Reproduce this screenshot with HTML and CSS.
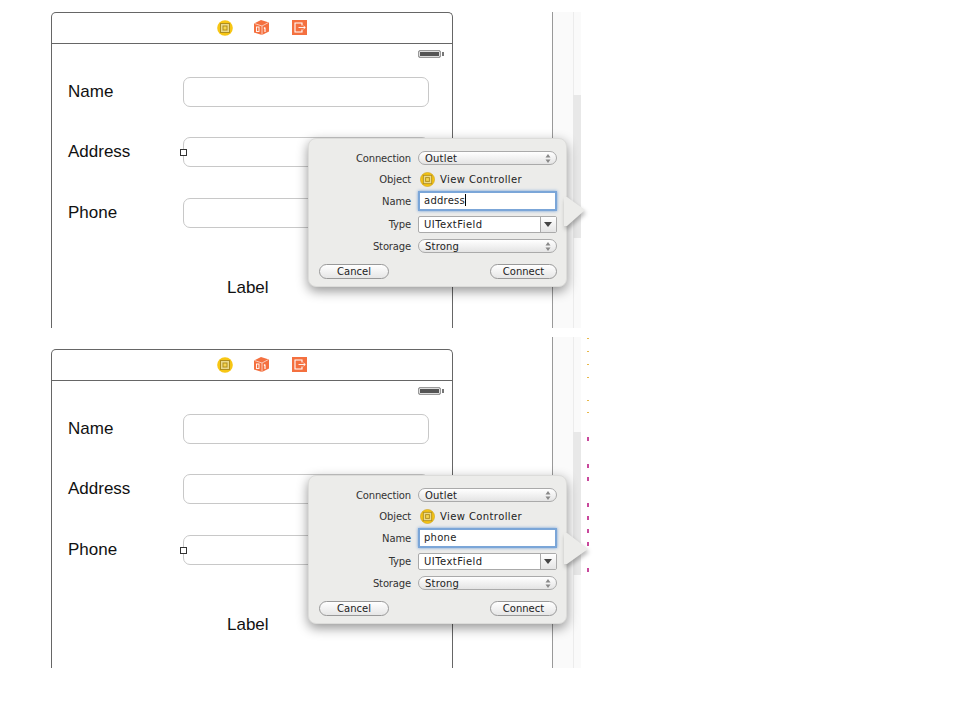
FILE: index.html
```html
<!DOCTYPE html>
<html lang="en">
<head>
<meta charset="utf-8">
<title>Outlet connections</title>
<link rel="stylesheet" href="styles.css">
</head>
<body>
<section class="shot shot-one">
  <div class="device">
    <div class="dock">
      <svg class="dock-icon" width="16" height="16" viewBox="0 0 16 16"><circle cx="8" cy="8" r="7.800" fill="#f7c614"/><rect x="3.500" y="3.500" width="9" height="9" fill="#ead98c" stroke="#b08e1c"/><rect x="6" y="6" width="4" height="4" fill="#f5d64e" stroke="#b08e1c"/></svg>
      <svg class="dock-icon" width="15" height="15" viewBox="0 0 15 15"><path d="M0 3.500L7 0l8 2.500v9L8 15l-8-2.500z" fill="#f4703f"/><path d="M.5 3.500L8 6l6.500-3.500M8 6v9" stroke="#fbd5c6" stroke-width=".9" fill="none"/><rect x="2.500" y="7" width="2.500" height="4.500" fill="none" stroke="#fff" stroke-width=".9"/><path d="M11 7.500v4.500M10 8.500l1-1" stroke="#fff" stroke-width="1.100" fill="none"/></svg>
      <svg class="dock-icon" width="15" height="15" viewBox="0 0 15 15"><rect width="15" height="15" fill="#f4703f"/><path d="M10 5.500V3H3v9h7V9.500" fill="none" stroke="#fff" stroke-width="1.100"/><path d="M6.500 7.500h6.500M11.500 6l1.800 1.500-1.800 1.500" fill="none" stroke="#fff" stroke-width=".9"/></svg>
    </div>
    <div class="status"><span class="battery"></span></div>
    <div class="scene">
      <div class="row"><span class="row-label">Name</span><span class="field"></span></div>
      <div class="row row-address"><span class="row-label">Address</span><span class="field"><i class="handle"></i></span></div>
      <div class="row row-phone"><span class="row-label">Phone</span><span class="field"></span></div>
      <div class="plain-label">Label</div>
    </div>
  </div>
  <div class="inspector">
    <div class="gutter"></div>
    <div class="track"><div class="thumb thumb-one"></div></div>
  </div>
  <div class="popover popover-one">
    <div class="pop-row"><label>Connection</label><div class="select">Outlet<svg class="updown" width="6" height="9" viewBox="0 0 6 9"><path d="M3 0l2.500 3.500h-5zM3 9L.5 5.500h5z" fill="#888"/></svg></div></div>
    <div class="pop-row pop-object"><label>Object</label><div class="object"><svg width="15" height="15" viewBox="0 0 16 16"><circle cx="8" cy="8" r="7.500" fill="#f7c614" stroke="#c99a10" stroke-width=".6"/><rect x="3.500" y="3.500" width="9" height="9" fill="#ead98c" stroke="#b08e1c"/><rect x="6" y="6" width="4" height="4" fill="#f5d64e" stroke="#b08e1c"/></svg>View Controller</div></div>
    <div class="pop-row pop-name"><label>Name</label><div class="name-input">address<i class="caret"></i></div></div>
    <div class="pop-row pop-type"><label>Type</label><div class="combo"><span class="combo-text">UITextField</span><span class="combo-arrow"></span></div></div>
    <div class="pop-row pop-storage"><label>Storage</label><div class="select">Strong<svg class="updown" width="6" height="9" viewBox="0 0 6 9"><path d="M3 0l2.500 3.500h-5zM3 9L.5 5.500h5z" fill="#888"/></svg></div></div>
    <div class="pop-actions"><span class="btn btn-cancel">Cancel</span><span class="btn btn-connect">Connect</span></div>
    <svg class="pop-arrow arrow-one" width="21" height="31" viewBox="0 0 21 31"><path d="M0 0h3L21 13 3 29H0z" fill="#ececea"/></svg>
  </div>
</section>

<section class="shot shot-two">
  <div class="device device-two">
    <div class="dock">
      <svg class="dock-icon" width="16" height="16" viewBox="0 0 16 16"><circle cx="8" cy="8" r="7.800" fill="#f7c614"/><rect x="3.500" y="3.500" width="9" height="9" fill="#ead98c" stroke="#b08e1c"/><rect x="6" y="6" width="4" height="4" fill="#f5d64e" stroke="#b08e1c"/></svg>
      <svg class="dock-icon" width="15" height="15" viewBox="0 0 15 15"><path d="M0 3.500L7 0l8 2.500v9L8 15l-8-2.500z" fill="#f4703f"/><path d="M.5 3.500L8 6l6.500-3.500M8 6v9" stroke="#fbd5c6" stroke-width=".9" fill="none"/><rect x="2.500" y="7" width="2.500" height="4.500" fill="none" stroke="#fff" stroke-width=".9"/><path d="M11 7.500v4.500M10 8.500l1-1" stroke="#fff" stroke-width="1.100" fill="none"/></svg>
      <svg class="dock-icon" width="15" height="15" viewBox="0 0 15 15"><rect width="15" height="15" fill="#f4703f"/><path d="M10 5.500V3H3v9h7V9.500" fill="none" stroke="#fff" stroke-width="1.100"/><path d="M6.500 7.500h6.500M11.500 6l1.800 1.500-1.800 1.500" fill="none" stroke="#fff" stroke-width=".9"/></svg>
    </div>
    <div class="status"><span class="battery"></span></div>
    <div class="scene">
      <div class="row"><span class="row-label">Name</span><span class="field"></span></div>
      <div class="row row-address"><span class="row-label">Address</span><span class="field"></span></div>
      <div class="row row-phone"><span class="row-label">Phone</span><span class="field"><i class="handle"></i></span></div>
      <div class="plain-label">Label</div>
    </div>
  </div>
  <div class="inspector">
    <div class="gutter"></div>
    <div class="track"><div class="thumb thumb-two"></div></div>
  </div>
  <svg class="code-dots" width="3" height="240" viewBox="0 0 3 240">
    <g fill="#e8b84a"><rect y="1" width="2" height="1"/><rect y="14" width="2" height="1"/><rect y="27" width="2" height="1"/><rect y="40" width="2" height="1"/><rect y="63" width="2" height="1"/><rect y="75" width="2" height="1"/></g>
    <g fill="#c9489c"><rect y="100" width="2" height="4"/><rect y="127" width="2" height="4"/><rect y="140" width="2" height="4"/><rect y="166" width="2" height="4"/><rect y="179" width="2" height="4"/><rect y="192" width="2" height="4"/><rect y="205" width="2" height="4"/><rect y="231" width="2" height="4"/></g>
  </svg>
  <div class="popover popover-two">
    <div class="pop-row"><label>Connection</label><div class="select">Outlet<svg class="updown" width="6" height="9" viewBox="0 0 6 9"><path d="M3 0l2.500 3.500h-5zM3 9L.5 5.500h5z" fill="#888"/></svg></div></div>
    <div class="pop-row pop-object"><label>Object</label><div class="object"><svg width="15" height="15" viewBox="0 0 16 16"><circle cx="8" cy="8" r="7.500" fill="#f7c614" stroke="#c99a10" stroke-width=".6"/><rect x="3.500" y="3.500" width="9" height="9" fill="#ead98c" stroke="#b08e1c"/><rect x="6" y="6" width="4" height="4" fill="#f5d64e" stroke="#b08e1c"/></svg>View Controller</div></div>
    <div class="pop-row pop-name"><label>Name</label><div class="name-input">phone</div></div>
    <div class="pop-row pop-type"><label>Type</label><div class="combo"><span class="combo-text">UITextField</span><span class="combo-arrow"></span></div></div>
    <div class="pop-row pop-storage"><label>Storage</label><div class="select">Strong<svg class="updown" width="6" height="9" viewBox="0 0 6 9"><path d="M3 0l2.500 3.500h-5zM3 9L.5 5.500h5z" fill="#888"/></svg></div></div>
    <div class="pop-actions"><span class="btn btn-cancel">Cancel</span><span class="btn btn-connect">Connect</span></div>
    <svg class="pop-arrow arrow-two" width="24" height="32" viewBox="0 0 24 32"><path d="M0 0h3L24 16 3 31H0z" fill="#ececea"/></svg>
  </div>
</section>
</body>
</html>
```

FILE: styles.css
```css
* { box-sizing: border-box; }
html, body { margin: 0; background: #fff; }
body { padding-top: 12px; font-family: "Liberation Sans", Arial, sans-serif; color: #111; }

.shot { position: relative; display: flex; align-items: stretch; padding-left: 51px; }
.shot-one { height: 316px; margin-bottom: 9px; }
.shot-two { height: 331px; }

.device { width: 402px; border: 1px solid #666; border-bottom: 0; border-radius: 5px 5px 0 0; background: #fff; }
.device-two { margin-top: 12px; }
.dock { height: 31px; border-bottom: 1px solid #666; display: flex; align-items: center; padding: 0 0 1px 165px; gap: 21px; }
.dock-icon { display: block; flex: none; }
.dock-icon + .dock-icon + .dock-icon { margin-left: 2px; }
.status { display: flex; justify-content: flex-end; padding: 6px 11px 0 0; height: 14px; }
.battery { position: relative; display: block; width: 23px; height: 8px; background: #555; border: 1px solid #999; border-radius: 2px; box-shadow: inset 0 0 0 1px #ddd; }
.battery::after { content: ""; position: absolute; right: -4px; top: 1px; width: 2px; height: 4px; background: #777; }
.scene { padding: 19px 23px 0 16px; }
.row { display: flex; align-items: center; height: 30px; }
.row-address { margin-top: 30px; }
.row-phone { margin-top: 31px; }
.row-label { width: 115px; font-size: 17px; line-height: 20px; }
.field { position: relative; display: block; width: 246px; height: 30px; border: 1px solid #c8c8c8; border-radius: 7px; }
.handle { position: absolute; left: -4px; top: 11px; width: 7px; height: 7px; background: #fff; border: 1px solid #333; }
.plain-label { margin-top: 50px; padding-left: 159px; font-size: 17px; line-height: 20px; }

.inspector { display: flex; width: 29px; margin-left: 99px; border-left: 1px solid #999; background: #fafafa; }
.gutter { width: 21px; border-right: 1px solid #ececec; }
.track { width: 7px; }
.thumb { width: 8px; margin-left: -1px; height: 143px; background: #e8e8e8; }
.thumb-one { margin-top: 83px; }
.thumb-two { margin-top: 95px; }
.code-dots { display: block; margin-left: 6px; flex: none; }

.popover { position: absolute; left: 308px; width: 259px; height: 149px; padding: 12px 9px 0 0; background: #ececea; border: 1px solid #dcdcda; border-radius: 8px; box-shadow: 0 4px 12px rgba(0,0,0,.42); font-family: "DejaVu Sans", sans-serif; font-size: 10px; color: #222; }
.popover-one { top: 126px; }
.popover-two { top: 138px; }
.pop-row { display: flex; align-items: center; height: 14px; }
.pop-row label { width: 102px; text-align: right; color: #333; letter-spacing: -.15px; }
.select { position: relative; margin-left: 7px; width: 139px; height: 14px; line-height: 13px; padding-left: 6px; border: 1px solid #aaa; border-radius: 7px; background: linear-gradient(#fff, #e4e4e4); letter-spacing: .2px; }
.updown { position: absolute; right: 5px; top: 2px; }
.pop-object { margin-top: 7px; height: 15px; }
.object { display: flex; align-items: center; gap: 5px; margin-left: 9px; letter-spacing: .4px; }
.pop-name { margin-top: 4px; height: 20px; }
.name-input { margin-left: 7px; width: 139px; height: 20px; line-height: 16px; padding-left: 4px; background: #fff; border: 2px solid #7ba6d8; box-shadow: 0 0 3px #6f9fd8; letter-spacing: .25px; }
.caret { display: inline-block; width: 1px; height: 12px; background: #000; vertical-align: -2px; }
.pop-type { margin-top: 5px; height: 17px; }
.combo { display: flex; margin-left: 7px; width: 139px; height: 17px; background: #fff; border: 1px solid #aaa; border-radius: 2px; }
.combo-text { flex: 1; line-height: 15px; padding-left: 5px; letter-spacing: .45px; }
.combo-arrow { position: relative; width: 16px; border-left: 1px solid #aaa; background: linear-gradient(#fff, #e4e4e4); }
.combo-arrow::after { content: ""; position: absolute; left: 3px; top: 5px; border: 4px solid transparent; border-top: 5px solid #444; border-bottom: 0; }
.pop-storage { margin-top: 6px; }
.pop-actions { display: flex; justify-content: space-between; margin-top: 11px; padding-left: 10px; }
.btn { display: block; height: 15px; line-height: 13px; text-align: center; border: 1px solid #999; border-radius: 8px; background: linear-gradient(#fff, #e6e6e6); }
.btn-cancel { width: 70px; }
.btn-connect { width: 67px; }
.pop-arrow { position: absolute; left: 255px; filter: drop-shadow(1px 3px 2px rgba(0,0,0,.28)); }
.arrow-one { top: 58px; }
.arrow-two { top: 57px; }
```
